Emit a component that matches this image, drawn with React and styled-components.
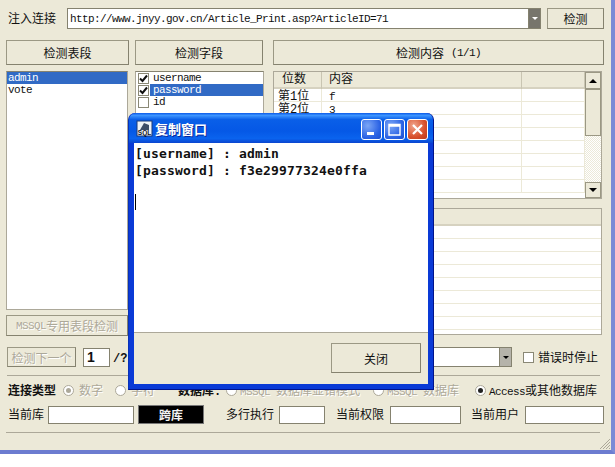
import React from 'react'
import styled, { createGlobalStyle } from 'styled-components'

const GlobalStyle = createGlobalStyle`
  html, body { margin: 0; padding: 0; background: #fff; }
  * { box-sizing: border-box; }
`

const cjk = `"Liberation Mono", "Noto Sans CJK SC", monospace`

const Frame = styled.div`
  position: relative;
  width: 615px;
  height: 454px;
  padding: 8px 11px 0 6px;
  background: #ece9d8;
  border-right: 4px solid #7b8ad6;
  border-bottom: 4px solid #6c7cd0;
  font-family: ${cjk};
  font-size: 12px;
  color: #111;
  overflow: hidden;
`

// latin runs in the reference are a 6px wide bitmap font
const Lat = styled.span`
  font-size: 11px;
  letter-spacing: -0.6px;
`

const Row = styled.div`
  display: flex;
  align-items: center;
  height: ${p => p.$h}px;
  margin-top: ${p => p.$top || 0}px;
`

const Label = styled.span`
  flex: none;
  width: ${p => p.$w}px;
  margin-left: ${p => p.$left || 0}px;
  padding-top: 3px;
  font-weight: ${p => (p.$bold ? 700 : 400)};
  color: ${p => (p.$off ? '#aca899' : 'inherit')};
  text-shadow: ${p => (p.$off ? '1px 1px 0 #fff' : 'none')};
  white-space: nowrap;
  line-height: 14px;
`

const Btn = styled.div`
  flex: none;
  display: flex;
  align-items: center;
  justify-content: center;
  width: ${p => p.$w}px;
  height: ${p => p.$h}px;
  margin-left: ${p => p.$left || 0}px;
  margin-top: ${p => p.$top || 0}px;
  padding-top: 1px;
  background: #ece9d8;
  border: 1px solid #9b9884;
  border-right-color: #85826f;
  border-bottom-color: #85826f;
  color: ${p => (p.$off ? '#aca899' : '#111')};
  text-shadow: ${p => (p.$off ? '1px 1px 0 #fff' : 'none')};
  white-space: pre;
`

const BlackBtn = styled(Btn)`
  background: #000;
  color: #f4f4f4;
  font-weight: 700;
  border-color: #777;
`

const Field = styled.div`
  flex: none;
  width: ${p => p.$w}px;
  height: ${p => p.$h || 18}px;
  margin-left: ${p => p.$left || 0}px;
  background: #fff;
  border: 1px solid #85826f;
`

const Combo = styled.div`
  flex: none;
  display: flex;
  align-items: center;
  width: ${p => p.$w}px;
  height: ${p => p.$h}px;
  margin-left: ${p => p.$left || 0}px;
  background: #fff;
  border: 1px solid #85826f;
`

const ComboText = styled.span`
  flex: 1;
  padding-left: 2px;
  font-size: 11px;
  letter-spacing: -0.6px;
  white-space: nowrap;
`

const ComboArrow = styled.span`
  flex: none;
  display: flex;
  align-items: center;
  justify-content: center;
  width: 12px;
  height: 100%;
  background: ${p => (p.$dark ? '#77756c' : '#b5b3aa')};
  border-left: 1px solid #85826f;
  &::after {
    content: '';
    border-left: 3px solid transparent;
    border-right: 3px solid transparent;
    border-top: 3px solid ${p => (p.$dark ? '#fff' : '#000')};
  }
`

const Main = styled.div`
  display: grid;
  grid-template-columns: 122px 129px 331px;
  column-gap: 7px;
  height: 265px;
  margin-top: 6px;
`

const LeftCol = styled.div`
  display: flex;
  flex-direction: column;
`

const ListBox = styled.div`
  height: ${p => p.$h}px;
  background: #fff;
  border: 1px solid #aca899;
  border-top-color: #85826f;
  padding: 0;
`

const Item = styled.div`
  display: flex;
  align-items: center;
  height: 12px;
  font-size: 11px;
  letter-spacing: -0.6px;
  padding-left: 1px;
  background: ${p => (p.$sel ? '#316ac5' : 'transparent')};
  color: ${p => (p.$sel ? '#fff' : '#111')};
`

const CheckRow = styled.div`
  display: flex;
  align-items: center;
  height: 12px;
  padding-left: 2px;
`

const CheckBox = styled.span`
  flex: none;
  display: flex;
  align-items: center;
  justify-content: center;
  width: ${p => p.$size || 11}px;
  height: ${p => p.$size || 11}px;
  margin-left: ${p => p.$left || 0}px;
  background: #fff;
  border: 1px solid #8a8875;
`

const CheckText = styled.span`
  flex: 1;
  height: 12px;
  margin-left: 1px;
  padding-left: 3px;
  font-size: 11px;
  line-height: 12px;
  letter-spacing: -0.6px;
  background: ${p => (p.$sel ? '#316ac5' : 'transparent')};
  color: ${p => (p.$sel ? '#fff' : '#111')};
`

const RightCol = styled.div`
  display: flex;
  flex-direction: column;
  padding-left: 2px;
`

const TablePane = styled.div`
  display: flex;
  height: ${p => p.$h}px;
  margin-top: ${p => p.$top || 0}px;
  background: #fff;
  border: 1px solid #aca899;
  overflow: hidden;
`

const TableBody = styled.div`
  flex: 1;
  min-width: 0;
  overflow: hidden;
`

const HeadRow = styled.div`
  display: grid;
  grid-template-columns: 48px 200px 1fr;
  height: 17px;
  background: #ece9d8;
  border-bottom: 2px solid #d6d2c0;
`

const HeadCell = styled.div`
  padding-left: ${p => p.$pad || 8}px;
  line-height: 17px;
  border-right: 1px solid #c9c5b2;
`

const DataRow = styled.div`
  display: grid;
  grid-template-columns: 48px 200px 1fr;
  height: 13px;
  border-bottom: 1px solid #ece9d8;
`

const DataCell = styled.div`
  padding-left: ${p => p.$pad || 4}px;
  line-height: 16px;
  font-size: ${p => (p.$mono ? 11 : 12)}px;
  border-right: 1px solid #ece9d8;
  white-space: nowrap;
`

const ScrollBar = styled.div`
  flex: none;
  display: flex;
  flex-direction: column;
  width: 16px;
  background: repeating-conic-gradient(#ece9d8 0 25%, #fff 0 50%) 0 0 / 2px 2px;
`

const ScrollBtn = styled.div`
  flex: none;
  display: flex;
  align-items: center;
  justify-content: center;
  width: 16px;
  height: ${p => p.$h}px;
  margin-top: ${p => (p.$end ? 'auto' : 0)};
  background: #ece9d8;
  border: 1px solid #9b9884;
  &::after {
    content: ${p => (p.$arrow ? "''" : 'none')};
    border-left: 4px solid transparent;
    border-right: 4px solid transparent;
    ${p => (p.$arrow === 'up' ? 'border-bottom: 4px solid #000;' : 'border-top: 4px solid #000;')}
  }
`

const Sep = styled.div`
  height: 1px;
  margin-top: ${p => p.$top}px;
  margin-left: ${p => p.$left || 0}px;
  background: #aca899;
`

const Radio = styled.span`
  flex: none;
  display: flex;
  align-items: center;
  justify-content: center;
  width: 11px;
  height: 11px;
  margin-left: ${p => p.$left || 0}px;
  margin-right: 3px;
  background: #fff;
  border: 1px solid #aca899;
  border-radius: 50%;
  &::after {
    content: ${p => (p.$on ? "''" : 'none')};
    width: 5px;
    height: 5px;
    border-radius: 50%;
    background: ${p => (p.$off ? '#aca899' : '#222')};
  }
`

const NumField = styled(Field)`
  font-family: "Liberation Sans", sans-serif;
  font-weight: 700;
  font-size: 14px;
  line-height: 17px;
  padding-left: 3px;
`

const Window = styled.div`
  position: absolute;
  left: 128px;
  top: 113px;
  width: 306px;
  height: 277px;
  display: flex;
  flex-direction: column;
  padding: 0 5px 5px 5px;
  background: #0a3ad6;
  border-left: 1px solid #0831b8;
  border-right: 1px solid #00138c;
  border-bottom: 1px solid #00138c;
  border-radius: 7px 7px 0 0;
`

const TitleBar = styled.div`
  flex: none;
  display: flex;
  align-items: center;
  height: 30px;
  margin: 0 -5px;
  padding: 0 5px 0 7px;
  border-radius: 7px 7px 0 0;
  background: linear-gradient(180deg, #0a5ae8 0, #3d95ff 8%, #0a5fe8 22%, #0558e6 60%, #0a63ee 85%, #0a45cf 100%);
`

const TitleText = styled.span`
  flex: 1;
  margin-left: 2px;
  color: #fff;
  font-family: "Noto Sans CJK SC", sans-serif;
  font-weight: 700;
  font-size: 13px;
  text-shadow: 1px 1px 0 #0a2a9c;
`

const WinBtn = styled.div`
  flex: none;
  display: flex;
  align-items: center;
  justify-content: center;
  width: 21px;
  height: 21px;
  margin-left: 2px;
  margin-top: 3px;
  border: 1px solid #fff;
  border-radius: 3px;
  background: ${p => (p.$close
    ? 'radial-gradient(circle at 30% 30%, #f0a58c, #d8502c 60%, #b8381c)'
    : 'radial-gradient(circle at 30% 30%, #7ba6f6, #2a62e4 65%, #1c4fd0)')};
`

const Output = styled.div`
  flex: 1;
  padding: 3px 1px 0 1px;
  background: #fff;
  border-bottom: 1px solid #aca899;
  font-family: "DejaVu Sans Mono", monospace;
  font-size: 13px;
  font-weight: 700;
  letter-spacing: 0.17px;
  line-height: 16.5px;
  color: #111;
`

const Caret = styled.div`
  width: 1px;
  height: 16px;
  margin-top: 15px;
  background: #000;
`

const WinFoot = styled.div`
  flex: none;
  display: flex;
  justify-content: flex-end;
  height: 51px;
  padding: 10px 7px 0 0;
  background: #ece9d8;
`

const Grip = styled.svg`
  position: absolute;
  right: 0;
  bottom: 0;
`

const tableRows = [['第1位', 'f'], ['第2位', '3'], ['', ''], ['', ''], ['', ''], ['', ''], ['', ''], ['', '']]
const logRows = [0, 1, 2, 3, 4, 5, 6, 7]

const Tick = () => (
  <svg width="9" height="9" viewBox="0 0 9 9">
    <path d="M1 4.5 L3.5 7 L8 1.5" fill="none" stroke="#111" strokeWidth="2" />
  </svg>
)

const App = () => {
  return (
    <Frame>
      <GlobalStyle />
      <Row $h={21}>
        <Label $w={47} $left={2}>注入连接</Label>
        <Combo $w={474} $h={21} $left={12}>
          <ComboText>http://www.jnyy.gov.cn/Article_Print.asp?ArticleID=71</ComboText>
          <ComboArrow $dark />
        </Combo>
        <Btn $w={57} $h={21} $left={6}>检测</Btn>
      </Row>
      <Row $h={25} $top={11}>
        <Btn $w={123} $h={25}>检测表段</Btn>
        <Btn $w={128} $h={25} $left={6}>检测字段</Btn>
        <Btn $w={331} $h={25} $left={10}>检测内容 <Lat>(1/1)</Lat></Btn>
      </Row>
      <Main>
        <LeftCol>
          <ListBox $h={239}>
            <Item $sel>admin</Item>
            <Item>vote</Item>
          </ListBox>
          <Btn $w={122} $h={21} $top={5} $off><Lat>MSSQL</Lat>专用表段检测</Btn>
        </LeftCol>
        <LeftCol>
          <ListBox $h={120}>
            <CheckRow><CheckBox><Tick /></CheckBox><CheckText>username</CheckText></CheckRow>
            <CheckRow><CheckBox><Tick /></CheckBox><CheckText $sel>password</CheckText></CheckRow>
            <CheckRow><CheckBox /><CheckText>id</CheckText></CheckRow>
          </ListBox>
        </LeftCol>
        <RightCol>
          <TablePane $h={128}>
            <TableBody>
              <HeadRow>
                <HeadCell>位数</HeadCell>
                <HeadCell $pad={7}>内容</HeadCell>
                <HeadCell />
              </HeadRow>
              {tableRows.map((r, i) => (
                <DataRow key={i}>
                  <DataCell>{r[0]}</DataCell>
                  <DataCell $pad={7} $mono>{r[1]}</DataCell>
                  <DataCell />
                </DataRow>
              ))}
            </TableBody>
            <ScrollBar>
              <ScrollBtn $h={17} $arrow="up" />
              <ScrollBtn $h={47} />
              <ScrollBtn $h={16} $end $arrow="down" />
            </ScrollBar>
          </TablePane>
          <TablePane $h={127} $top={9}>
            <TableBody>
              <HeadRow />
              {logRows.map(i => <DataRow key={i} />)}
            </TableBody>
          </TablePane>
        </RightCol>
      </Main>
      <Row $h={20} $top={11}>
        <Btn $w={69} $h={20} $left={1} $off>检测下一个</Btn>
        <NumField $w={27} $h={19} $left={7}>1</NumField>
        <Label $w={20} $left={3} $bold>/?</Label>
        <Combo $w={380} $h={20} $left={-1}>
          <ComboText />
          <ComboArrow />
        </Combo>
        <CheckBox $size={11} $left={11} />
        <Label $w={60} $left={4}>错误时停止</Label>
      </Row>
      <Sep $top={8} $left={1} />
      <Row $h={14} $top={7}>
        <Label $w={50} $left={2} $bold>连接类型</Label>
        <Radio $left={5} $on $off />
        <Label $w={24} $left={2} $off>数字</Label>
        <Radio $left={12} />
        <Label $w={24} $left={2} $off>字符</Label>
        <Label $w={48} $left={23} $bold>数据库:</Label>
        <Radio $left={0} />
        <Label $w={125} $off><Lat>MSSQL </Lat>数据库显错模式</Label>
        <Radio $left={8} />
        <Label $w={86} $off><Lat>MSSQL </Lat>数据库</Label>
        <Radio $left={2} $on />
        <Label $w={108}><Lat>Access</Lat>或其他数据库</Label>
      </Row>
      <Row $h={19} $top={8}>
        <Label $w={36} $left={2}>当前库</Label>
        <Field $w={86} $left={4} />
        <BlackBtn $w={66} $h={19} $left={4}>跨库</BlackBtn>
        <Label $w={48} $left={22}>多行执行</Label>
        <Field $w={46} $left={5} />
        <Label $w={48} $left={11}>当前权限</Label>
        <Field $w={71} $left={6} />
        <Label $w={48} $left={10}>当前用户</Label>
        <Field $w={79} $left={6} />
      </Row>
      <Sep $top={8} />
      <Grip width="12" height="12" viewBox="0 0 12 12">
        <path d="M11 1 L1 11 M11 4 L4 11 M11 7 L7 11 M11 10 L10 11" stroke="#aca899" fill="none" />
      </Grip>
      <Window>
        <TitleBar>
          <svg width="17" height="17" viewBox="0 0 17 17">
            <rect x="1" y="1" width="15" height="15" fill="#eef2f6" stroke="#1b3a78" />
            <path d="M4 10 L8 3 L13 5 L13 10 Z" fill="#3c4c66" />
            <text x="8.5" y="15" textAnchor="middle" fontFamily="Liberation Sans" fontWeight="700" fontSize="6.5" fill="#0c1424">SQL</text>
          </svg>
          <TitleText>复制窗口</TitleText>
          <WinBtn>
            <svg width="13" height="13" viewBox="0 0 13 13"><rect x="2" y="9" width="7" height="3" fill="#fff" /></svg>
          </WinBtn>
          <WinBtn>
            <svg width="13" height="13" viewBox="0 0 13 13"><path d="M1 1.5H12V12H1Z M1 3H12" fill="none" stroke="#fff" strokeWidth="1.4" /></svg>
          </WinBtn>
          <WinBtn $close>
            <svg width="13" height="13" viewBox="0 0 13 13"><path d="M2 2L11 11M11 2L2 11" fill="none" stroke="#fff" strokeWidth="2.2" /></svg>
          </WinBtn>
        </TitleBar>
        <Output>
          <div>[username] : admin</div>
          <div>[password] : f3e29977324e0ffa</div>
          <Caret />
        </Output>
        <WinFoot>
          <Btn $w={90} $h={30}>关闭</Btn>
        </WinFoot>
      </Window>
    </Frame>
  )
}

export default App
